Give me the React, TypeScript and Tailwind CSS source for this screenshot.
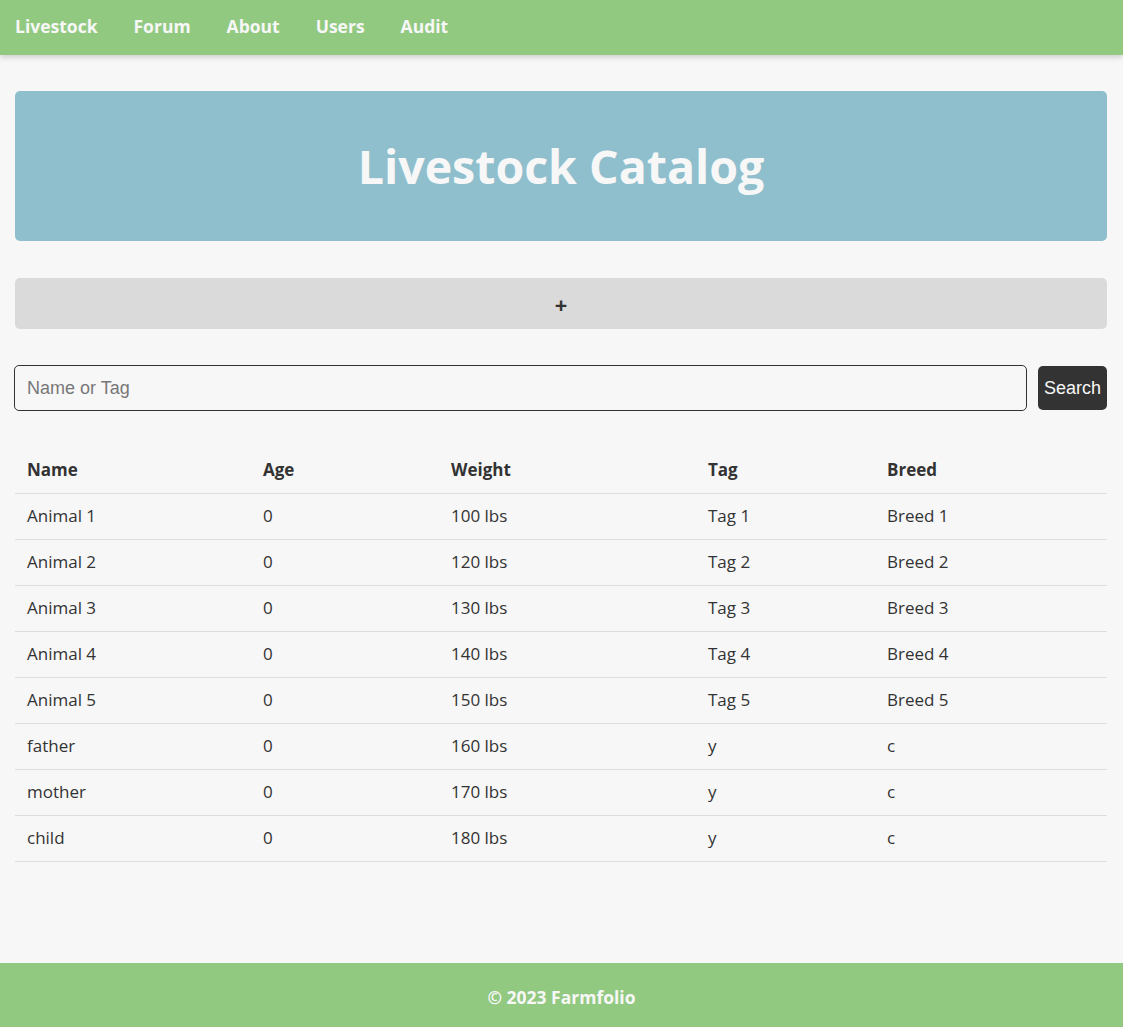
import React from "react";

const rows = [
  ["Animal 1", "0", "100 lbs", "Tag 1", "Breed 1"],
  ["Animal 2", "0", "120 lbs", "Tag 2", "Breed 2"],
  ["Animal 3", "0", "130 lbs", "Tag 3", "Breed 3"],
  ["Animal 4", "0", "140 lbs", "Tag 4", "Breed 4"],
  ["Animal 5", "0", "150 lbs", "Tag 5", "Breed 5"],
  ["father", "0", "160 lbs", "y", "c"],
  ["mother", "0", "170 lbs", "y", "c"],
  ["child", "0", "180 lbs", "y", "c"],
];

export default function App() {
  return (
    <div className="min-h-[1027px] flex flex-col bg-[#f7f7f7] text-[#333333] font-['Open_Sans',sans-serif]">
      <nav className="h-[55px] bg-[#92c981] flex items-center gap-9 pl-[15px] pb-[2px] shadow-[0_2px_6px_rgba(0,0,0,0.18)] relative z-10">
        {["Livestock", "Forum", "About", "Users", "Audit"].map((t) => (
          <a key={t} className="text-[#f7f7f7] font-bold text-[17.5px] leading-none">
            {t}
          </a>
        ))}
      </nav>
      <main className="flex-1 pl-[15px] pr-[16px] pt-[36px]">
        <div className="h-[150px] rounded-[5px] bg-[#8fbfcd] flex items-center justify-center">
          <h1 className="text-[46.5px] font-bold text-[#f7f7f7] leading-none">Livestock Catalog</h1>
        </div>
        <button className="mt-[37px] w-full h-[51px] rounded-[5px] bg-[#dadada] flex items-center justify-center text-[22px] font-bold text-[#333333] leading-none">
          +
        </button>
        <div className="mt-[36px] flex items-center gap-[11px] -ml-px">
          <input
            placeholder="Name or Tag"
            className="flex-1 h-[46px] rounded-[5px] border border-[#333333] bg-transparent px-3 text-[18px] font-['Liberation_Sans',Arial,sans-serif] placeholder:text-[#777777] outline-none"
          />
          <button className="h-[44px] w-[69px] rounded-[5px] bg-[#333333] text-[#f7f7f7] text-[18px] font-['Liberation_Sans',Arial,sans-serif]">
            Search
          </button>
        </div>
        <table className="mt-[36px] w-full border-collapse text-[17px] table-fixed">
          <colgroup>
            <col className="w-[236px]" />
            <col className="w-[188px]" />
            <col className="w-[257px]" />
            <col className="w-[179px]" />
            <col />
          </colgroup>
          <thead>
            <tr className="h-[46px] border-b border-[#dddddd]">
              {["Name", "Age", "Weight", "Tag", "Breed"].map((h) => (
                <th key={h} className="text-left font-bold px-3">
                  {h}
                </th>
              ))}
            </tr>
          </thead>
          <tbody>
            {rows.map((r) => (
              <tr key={r[0]} className="h-[46px] border-b border-[#dddddd]">
                {r.map((c, i) => (
                  <td key={i} className="px-3">
                    {c}
                  </td>
                ))}
              </tr>
            ))}
          </tbody>
        </table>
      </main>
      <footer className="h-[64px] bg-[#92c981] flex items-center justify-center pt-[4px]">
        <span className="text-[#f7f7f7] font-bold text-[17.5px]">© 2023 Farmfolio</span>
      </footer>
    </div>
  );
}
